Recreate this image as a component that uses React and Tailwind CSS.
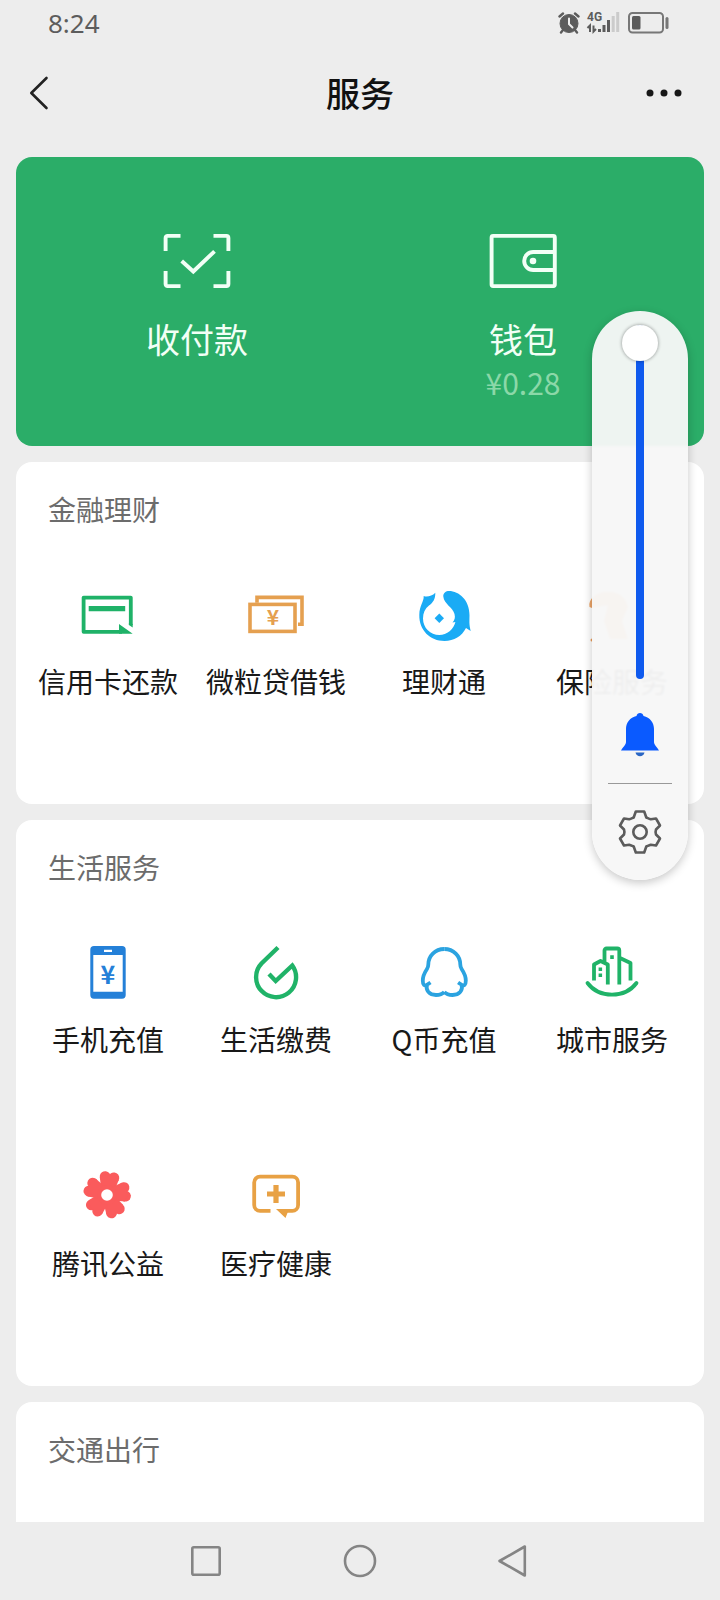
import React from "react";

const GLYPH_FONT = "'Noto Sans CJK SC', sans-serif";

function Icon({ children, w = 56 }) {
  return (
    <svg width={w} height="56" viewBox={`0 0 ${w} 56`} fill="none" aria-hidden="true">
      {children}
    </svg>
  );
}

const ScanIcon = () => (
  <Icon w={68}>
    <g stroke="#f2fff6" strokeWidth="3.9">
      <path d="M2.6 18V4.9a2 2 0 0 1 2-2H17.5M50.5 2.9H63.4a2 2 0 0 1 2 2V18M65.4 38V51.1a2 2 0 0 1-2 2H50.5M17.5 53.1H4.6a2 2 0 0 1-2-2V38" />
      <path d="M18.7 28L30.3 38.5L51.5 18.3" />
    </g>
  </Icon>
);

const WalletIcon = () => (
  <Icon w={68}>
    <g stroke="#f2fff6" strokeWidth="3.9">
      <rect x="2.6" y="2.9" width="63.2" height="50.2" rx="1.5" />
      <path d="M65 19H44.2a9 9 0 0 0 0 18H65" />
    </g>
    <circle cx="44" cy="28" r="3.3" fill="#f2fff6" />
  </Icon>
);

const CardIcon = () => (
  <Icon>
    <path d="M50.8 38V10.6H3.6V44.8H42" stroke="#1fb268" strokeWidth="3.8" strokeLinejoin="round" />
    <path d="M8.7 19H45.2V24.3H8.7zM39 37L52.7 46.7H39zM48.9 36L52.7 37V40.5L48.9 38z" fill="#1fb268" />
  </Icon>
);

const LoanIcon = () => (
  <Icon>
    <g stroke="#e5a050" strokeWidth="3.6">
      <rect x="2" y="17.4" width="45" height="27" />
      <path d="M9 15.7V10.4H54V37.3H50" />
    </g>
    <text x="25" y="38" textAnchor="middle" fontSize="21" fontWeight="700" fill="#e5a050" fontFamily={GLYPH_FONT}>¥</text>
  </Icon>
);

const FundIcon = () => (
  <Icon>
    <path
      fill="#1aabf5"
      d="M33 4C43 4 53.5 13 53.5 28C53.5 34 53 37 54.7 44L50 41C46 49 38 54 28.5 54C14 54 3 43 3.3 28C3.5 18 8 15 7.7 9C11 10.5 16 9 19.3 5.7C19.5 12 17 15.5 13 18.5C9 21.5 7 26 7 31.5C7 41 14.5 48 23.3 48C31 48 37.8 42 39.4 35L36.5 35.5C38.5 33 39.5 31 38.5 27C37 20.5 28 17 27.3 9.5C27 6 30 4 33 4z"
    />
    <path d="M23.3 26.5L28 31.3L23.3 36L18.6 31.3z" fill="#1aabf5" />
  </Icon>
);

const InsureIcon = () => (
  <Icon>
    <path d="M5.5 20C4 12 12 6 20 5C34 3 42 10 44 20L38 34L44 52H26L20 34L24 18L8 21z" fill="#ea9a56" opacity="0.9" />
    <circle cx="8" cy="53" r="1.5" fill="#ea9a56" />
  </Icon>
);

const PhoneIcon = () => (
  <Icon>
    <path
      fillRule="evenodd"
      fill="#2480d8"
      d="M14 1H42a3.7 3.7 0 0 1 3.7 3.7V50a3.7 3.7 0 0 1-3.7 3.7H14a3.7 3.7 0 0 1-3.7-3.7V4.7A3.7 3.7 0 0 1 14 1zM13.3 10V46.7H42.7V10zM24 4.7V6.9H32V4.7z"
    />
    <text x="28" y="38.5" textAnchor="middle" fontSize="25" fontWeight="700" fill="#2480d8" fontFamily={GLYPH_FONT}>¥</text>
  </Icon>
);

const BillIcon = () => (
  <Icon>
    <path d="M30 2.5L13.5 18.5A20 20 0 1 0 44.3 20.5L27.7 36L21 29" stroke="#20b368" strokeWidth="4.4" />
  </Icon>
);

const PenguinIcon = () => (
  <Icon>
    <g stroke="#2ba3e0" strokeWidth="3.8" strokeLinejoin="round">
      <path d="M28.3 4C19 4 12.3 11 12.3 19.5C12.3 21.5 12 22.5 11 24C8 28.5 6.8 32 6.8 35.5C6.8 40 8.5 41.5 11 39.8L14.5 37.5M11 39.8C9.5 45 13 50 20 50C24 50 26.5 49 28.3 47" />
      <path d="M28.3 4C37.6 4 44.3 11 44.3 19.5C44.3 21.5 44.6 22.5 45.6 24C48.6 28.5 49.8 32 49.8 35.5C49.8 40 48.1 41.5 45.6 39.8L42.1 37.5M45.6 39.8C47.1 45 43.6 50 36.6 50C32.6 50 30.1 49 28.3 47" />
    </g>
  </Icon>
);

const CityIcon = () => (
  <Icon>
    <g stroke="#20b368" strokeWidth="3.8" strokeLinejoin="round">
      <path d="M3.5 38C15 53.5 41 53.5 52.5 38" strokeLinecap="round" />
      <path d="M10 35.5V19.5L16.5 16L23.8 19.5V39.5M20.5 17V5.5a2 2 0 0 1 2-2H33.3a2 2 0 0 1 2 2V39.5M36 13L46.5 18V35.5" />
    </g>
    <path d="M26.2 10.3h3.6v3.6h-3.6zM14.6 22.6h3.5v3.5h-3.5zM14.6 28.4h3.5v3.5h-3.5z" fill="#20b368" />
  </Icon>
);

const FlowerIcon = () => (
  <Icon>
    <g transform="translate(27 26)" fill="#fa5b5c">
      {[8, 80, 152, 224, 296].map((a) => (
        <g key={a} transform={`rotate(${a})`}>
          <circle cx="-4.4" cy="-18" r="5.4" />
          <circle cx="4.4" cy="-18" r="5.4" />
          <path d="M-9.6 -16.5L-6.5 -5H6.5L9.6 -16.5L4 -20H-4z" />
        </g>
      ))}
      <circle r="10" />
      <circle r="5.8" fill="#fff" />
    </g>
  </Icon>
);

const MedicalIcon = () => (
  <Icon>
    <path
      d="M22.5 41.8H12a5.8 5.8 0 0 1-5.8-5.8V13.4A5.8 5.8 0 0 1 12 7.6H44.3a5.8 5.8 0 0 1 5.8 5.8V36a5.8 5.8 0 0 1-5.8 5.8H34"
      stroke="#e8a144"
      strokeWidth="3.8"
    />
    <path d="M28 39.9H41L37.5 49zM25.4 16h5.2v6.4H37v5.2h-6.4V34h-5.2v-6.4H19v-5.2h6.4z" fill="#e8a144" />
  </Icon>
);

function StatusBar() {
  return (
    <div className="flex h-[46px] items-center justify-between pr-[50px] pl-12 text-[#5c5c5c]">
      <time className="font-['Noto_Sans',sans-serif] text-[26px] leading-8">8:24</time>
      <svg width="112" height="24" viewBox="0 0 112 24" fill="none" aria-hidden="true">
        <g fill="#5c5c5c" stroke="#5c5c5c">
          <circle cx="11" cy="12.5" r="9" strokeWidth="1" />
          <path d="M1.5 5.5L5 2.5M17 2.5L20.5 5.5M5 19L3 21.5M17 19L19 21.5" strokeWidth="2.4" strokeLinecap="round" />
          <path d="M11 7.5V13L14.5 16.5" stroke="#eee" strokeWidth="2" fill="none" strokeLinecap="round" />
        </g>
        <text x="29" y="10" fontSize="12" fontWeight="700" fill="#5c5c5c" fontFamily="'Liberation Sans Narrow', Roboto, sans-serif">4G</text>
        <path d="M32 21V14.5L29.5 17M35.5 14.5V20.5L38 18" stroke="#5c5c5c" strokeWidth="2" />
        <path d="M40 18h3v3h-3zM44.5 14h3V21h-3zM49 9h3v12h-3z" fill="#5c5c5c" />
        <path d="M53.7 5h3v16h-3zM58.2 1h3v20h-3z" fill="#cbcbcb" />
        <rect x="71" y="2" width="34" height="19.5" rx="3.5" stroke="#777" strokeWidth="2" />
        <rect x="74" y="5" width="8.5" height="13.5" rx="1.5" fill="#5c5c5c" />
        <rect x="107.5" y="6" width="3" height="12" rx="1.5" fill="#777" />
      </svg>
    </div>
  );
}

function Header() {
  return (
    <header className="grid h-[94px] grid-cols-3 items-center px-6">
      <button type="button" aria-label="返回" className="justify-self-start">
        <svg width="30" height="40" viewBox="0 0 30 40" fill="none" stroke="#222" strokeWidth="2.6" strokeLinecap="round" strokeLinejoin="round">
          <path d="M22.5 5L7.3 20L22.5 35" />
        </svg>
      </button>
      <h1 className="text-center text-[34px] leading-[48px] font-medium text-[#111]">服务</h1>
      <button type="button" aria-label="更多" className="justify-self-end">
        <svg width="64" height="40" viewBox="0 0 64 40" fill="#181818">
          <circle cx="18" cy="20" r="3.5" />
          <circle cx="32" cy="20" r="3.5" />
          <circle cx="46" cy="20" r="3.5" />
        </svg>
      </button>
    </header>
  );
}

function PayTile({ icon, label, note }) {
  return (
    <button type="button" className="flex flex-1 flex-col items-center">
      {icon}
      <span className="mt-[26px] text-[34px] leading-[48px] text-[#f2fff6]">{label}</span>
      {note && <span className="mt-px text-[30px] leading-9 text-[#8bd8a8]">{note}</span>}
    </button>
  );
}

function Section({ title, items = [], className = "rounded-2xl" }) {
  return (
    <section className={`bg-white ${className}`}>
      <h2 className="px-8 pt-[27px] pb-[51px] text-[28px] leading-10 text-[#6c6c6c]">{title}</h2>
      {items.length > 0 && (
        <ul className="grid grid-cols-4 px-2">
          {items.map(({ label, icon: Glyph }) => (
            <li key={label} className="h-56">
              <button type="button" className="flex w-full flex-col items-center pt-[7px]">
                <Glyph />
                <span className="mt-[18px] text-[28px] leading-10 whitespace-nowrap text-[#181818]">{label}</span>
              </button>
            </li>
          ))}
        </ul>
      )}
    </section>
  );
}

function VolumePanel() {
  return (
    <aside className="absolute top-[311px] right-8 flex w-24 flex-col items-center rounded-full bg-[#f7f7f7]/96 pt-3.5 pb-6 shadow-[0_3px_10px_rgba(0,0,0,0.22)] backdrop-blur-[1px]">
      <input
        type="range"
        aria-label="音量"
        min="0"
        max="100"
        defaultValue="100"
        className="h-[354px] w-9 appearance-none bg-transparent [direction:rtl] [writing-mode:vertical-lr] [&::-webkit-slider-runnable-track]:mx-auto [&::-webkit-slider-runnable-track]:w-2 [&::-webkit-slider-runnable-track]:rounded-full [&::-webkit-slider-runnable-track]:bg-[#0f5aee] [&::-webkit-slider-thumb]:-ml-3.5 [&::-webkit-slider-thumb]:size-9 [&::-webkit-slider-thumb]:appearance-none [&::-webkit-slider-thumb]:rounded-full [&::-webkit-slider-thumb]:bg-white [&::-webkit-slider-thumb]:shadow-[0_0_3px_1px_rgba(0,0,0,0.25)]"
      />
      <button type="button" aria-label="响铃" className="mt-8">
        <svg width="40" height="48" viewBox="0 0 40 48" fill="#0a5aff">
          <path d="M16.5 5C17 1 23 1 23.5 5C30 6.5 34 11.5 34 18V31C34 34 37 36 39 39.5H1C3 36 6 34 6 31V18C6 11.5 10 6.5 16.5 5z" />
          <path d="M15.5 41.5H24.5C23.5 46.5 16.5 46.5 15.5 41.5z" fill="#2a66c4" />
        </svg>
      </button>
      <hr className="mt-6 w-16 border-[#999]" />
      <button type="button" aria-label="设置" className="mt-6">
        <svg width="48" height="48" viewBox="0 0 48 48" fill="none" stroke="#5c5c5c" strokeWidth="2.6" strokeLinejoin="round">
          <path d="M19.8 3.5H28.2L30.3 9.5C32 10.2 33 10.8 34.8 11.3L40 10.5L44 17.5L40 21.5C39.3 23.5 39.3 24.5 40 26.5L44 30.5L40 37.5L34.8 36.7C33 37.2 32 37.8 30.3 38.5L28.2 44.5H19.8L17.7 38.5C16 37.8 15 37.2 13.2 36.7L8 37.5L4 30.5L8 26.5C8.7 24.5 8.7 23.5 8 21.5L4 17.5L8 10.5L13.2 11.3C15 10.8 16 10.2 17.7 9.5z" />
          <circle cx="24" cy="24" r="6.7" />
        </svg>
      </button>
    </aside>
  );
}

function NavBar() {
  const button = "flex w-[154px] items-center justify-center";
  const shape = { width: 36, height: 36, viewBox: "0 0 36 36", fill: "none", stroke: "#858585", strokeWidth: 2.6, strokeLinejoin: "round" };
  return (
    <nav className="flex h-[78px] items-stretch justify-center bg-[#ededed]">
      <button type="button" aria-label="最近任务" className={button}>
        <svg {...shape}><rect x="4.3" y="4.3" width="27.4" height="27.4" rx="1.5" /></svg>
      </button>
      <button type="button" aria-label="主屏幕" className={button}>
        <svg {...shape}><circle cx="18" cy="18" r="15" /></svg>
      </button>
      <button type="button" aria-label="返回上一级" className={button}>
        <svg {...shape}><path d="M28.8 3.5V32.5L3.5 18z" /></svg>
      </button>
    </nav>
  );
}

const finance = [
  { label: "信用卡还款", icon: CardIcon },
  { label: "微粒贷借钱", icon: LoanIcon },
  { label: "理财通", icon: FundIcon },
  { label: "保险服务", icon: InsureIcon },
];

const life = [
  { label: "手机充值", icon: PhoneIcon },
  { label: "生活缴费", icon: BillIcon },
  { label: "Q币充值", icon: PenguinIcon },
  { label: "城市服务", icon: CityIcon },
  { label: "腾讯公益", icon: FlowerIcon },
  { label: "医疗健康", icon: MedicalIcon },
];

export default function App() {
  return (
    <div className="relative flex min-h-screen flex-col bg-[#ededed] font-['Noto_Sans_CJK_SC',sans-serif]">
      <StatusBar />
      <Header />
      <main className="flex flex-1 flex-col gap-4 px-4 pt-[17px]">
        <section className="flex items-start rounded-2xl bg-[#2bad68] px-[18px] pt-[76px] pb-[46px]">
          <PayTile icon={<ScanIcon />} label="收付款" />
          <PayTile icon={<WalletIcon />} label="钱包" note="¥0.28" />
        </section>
        <Section title="金融理财" items={finance} />
        <Section title="生活服务" items={life} />
        <Section title="交通出行" className="flex-1 rounded-t-2xl" />
      </main>
      <NavBar />
      <VolumePanel />
    </div>
  );
}
